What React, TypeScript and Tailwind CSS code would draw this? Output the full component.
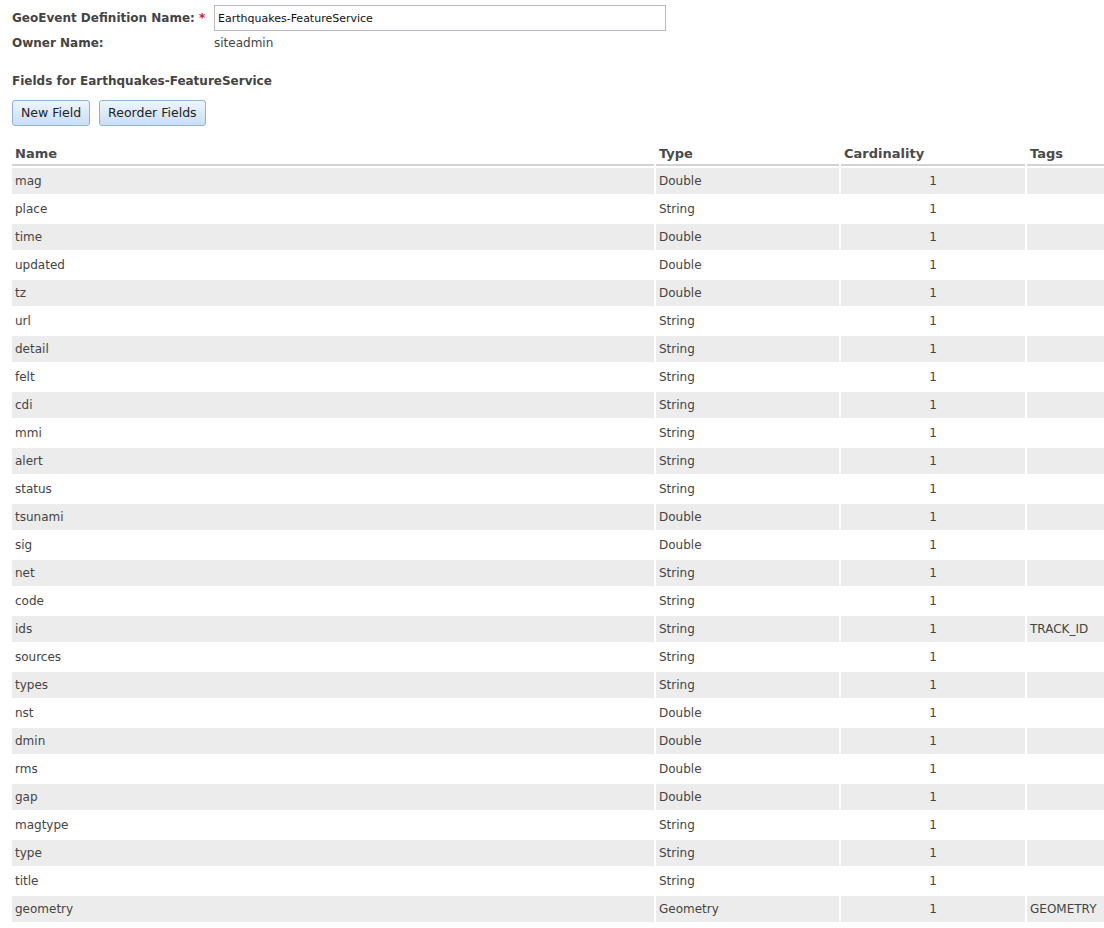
import React from "react"

interface FieldRow {
  name: string
  type: string
  cardinality: number
  tags?: string
}

const FIELDS: FieldRow[] = [
  { name: "mag", type: "Double", cardinality: 1 },
  { name: "place", type: "String", cardinality: 1 },
  { name: "time", type: "Double", cardinality: 1 },
  { name: "updated", type: "Double", cardinality: 1 },
  { name: "tz", type: "Double", cardinality: 1 },
  { name: "url", type: "String", cardinality: 1 },
  { name: "detail", type: "String", cardinality: 1 },
  { name: "felt", type: "String", cardinality: 1 },
  { name: "cdi", type: "String", cardinality: 1 },
  { name: "mmi", type: "String", cardinality: 1 },
  { name: "alert", type: "String", cardinality: 1 },
  { name: "status", type: "String", cardinality: 1 },
  { name: "tsunami", type: "Double", cardinality: 1 },
  { name: "sig", type: "Double", cardinality: 1 },
  { name: "net", type: "String", cardinality: 1 },
  { name: "code", type: "String", cardinality: 1 },
  { name: "ids", type: "String", cardinality: 1, tags: "TRACK_ID" },
  { name: "sources", type: "String", cardinality: 1 },
  { name: "types", type: "String", cardinality: 1 },
  { name: "nst", type: "Double", cardinality: 1 },
  { name: "dmin", type: "Double", cardinality: 1 },
  { name: "rms", type: "Double", cardinality: 1 },
  { name: "gap", type: "Double", cardinality: 1 },
  { name: "magtype", type: "String", cardinality: 1 },
  { name: "type", type: "String", cardinality: 1 },
  { name: "title", type: "String", cardinality: 1 },
  { name: "geometry", type: "Geometry", cardinality: 1, tags: "GEOMETRY" },
]

const Button = ({ label }: { label: string }) => (
  <button
    type="button"
    className="h-[26px] px-[8px] rounded-[3px] border border-[#8fb1d6] bg-gradient-to-b from-[#eef5fd] to-[#c9def4] text-[12.5px] text-[#222] leading-none"
  >
    {label}
  </button>
)

export default function App() {
  return (
    <div className="w-[1104px] h-[928px] overflow-hidden bg-white text-[12px] text-[#444] font-['DejaVu_Sans',Verdana,sans-serif]">
      {/* Definition header */}
      <div className="pl-[12px] pt-[5px]">
        <div className="flex items-center h-[26px]">
          <span className="w-[202px] font-bold">
            GeoEvent Definition Name: <span className="text-[#e0141e]">*</span>
          </span>
          <input
            readOnly
            value="Earthquakes-FeatureService"
            className="w-[452px] h-[26px] border border-[#b4b9c4] px-[3px] text-[11px] text-[#111] outline-none"
          />
        </div>
        <div className="flex items-center h-[23px]">
          <span className="w-[202px] font-bold">Owner Name:</span>
          <span>siteadmin</span>
        </div>
        <div className="mt-[18px] font-bold">Fields for Earthquakes-FeatureService</div>
        <div className="flex gap-[9px] mt-[10px]">
          <Button label="New Field" />
          <Button label="Reorder Fields" />
        </div>
      </div>

      {/* Fields table */}
      <div className="mt-[15px] ml-[10px] overflow-hidden">
        <table className="table-fixed border-separate border-spacing-[2px] w-[1097px]">
          <colgroup>
            <col className="w-[642px]" />
            <col className="w-[183px]" />
            <col className="w-[184px]" />
            <col className="w-[78px]" />
          </colgroup>
          <thead>
            <tr>
              {["Name", "Type", "Cardinality", "Tags"].map(h => (
                <th
                  key={h}
                  className="h-[23px] px-[3px] pt-0 pb-[2px] text-left font-bold text-[13px] leading-[16px] text-[#4a4a4a] border-b-2 border-[#d3d3d3] align-bottom"
                >
                  {h}
                </th>
              ))}
            </tr>
          </thead>
          <tbody>
            {FIELDS.map((f, i) => {
              const bg = i % 2 === 0 ? "bg-[#ececec]" : "bg-white"
              return (
                <tr key={f.name} className="h-[26px]">
                  <td className={`${bg} px-[3px]`}>{f.name}</td>
                  <td className={`${bg} px-[3px]`}>{f.type}</td>
                  <td className={`${bg} px-[3px] text-center`}>{f.cardinality}</td>
                  <td className={`${bg} px-[3px] whitespace-nowrap`}>{f.tags ?? ""}</td>
                </tr>
              )
            })}
          </tbody>
        </table>
      </div>
    </div>
  )
}
